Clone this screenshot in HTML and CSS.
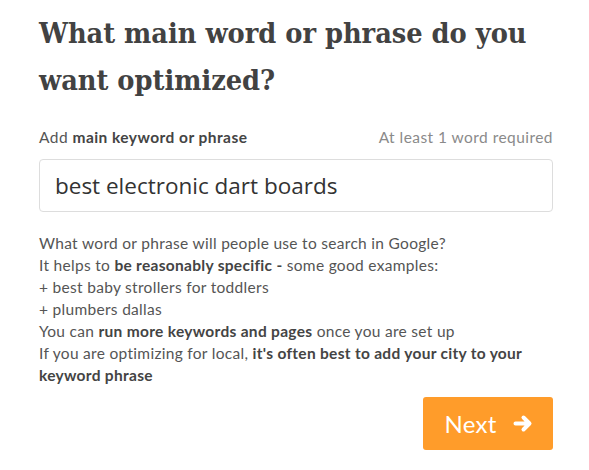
FILE: index.html
```html
<!DOCTYPE html>
<html>
<head>
<meta charset="utf-8">
<link rel="stylesheet" href="styles.css">
</head>
<body>
<div class="page">
  <h1 class="title">What main word or phrase do you want optimized?</h1>
  <div class="label-row">
    <span class="label">Add <b>main keyword or phrase</b></span>
    <span class="hint">At least 1 word required</span>
  </div>
  <div class="input">best electronic dart boards</div>
  <div class="help">
    <p>What word or phrase will people use to search in Google?</p>
    <p>It helps to <b>be reasonably specific -</b> some good examples:</p>
    <p>+ best baby strollers for toddlers</p>
    <p>+ plumbers dallas</p>
    <p>You can <b>run more keywords and pages</b> once you are set up</p>
    <p>If you are optimizing for local, <b>it's often best to add your city to your keyword phrase</b></p>
  </div>
  <div class="actions">
    <button class="next">Next
      <svg class="arrow" width="21" height="19" viewBox="0 0 21 19"><path d="M2.5 9.5 H16 M10.5 3.5 L16.5 9.5 L10.5 15.5" fill="none" stroke="#fff" stroke-width="4" stroke-linecap="round" stroke-linejoin="round"/></svg>
    </button>
  </div>
</div>
</body>
</html>
```
FILE: styles.css
```css
html, body { margin: 0; padding: 0; background: #fff; }
.page {
  padding: 0 36px 0 39px;
  width: 514px;
  font-family: Lato, "Noto Sans", sans-serif;
  color: #555;
}
.title {
  margin: 0;
  padding-top: 10px;
  font-family: "DejaVu Serif Condensed", "DejaVu Serif", serif;
  font-stretch: condensed;
  font-weight: bold;
  font-size: 28.6px;
  line-height: 47px;
  color: #424242;
}
.label-row {
  margin-top: 23px;
  display: flex;
  justify-content: space-between;
  font-size: 15.5px;
  letter-spacing: 0.45px;
  line-height: 20px;
}
.label { color: #555; }
.label b { color: #444; font-weight: bold; }
.hint { color: #8a8a8a; }
.input {
  margin-top: 12px;
  border: 1px solid #ddd;
  border-radius: 4px;
  box-sizing: border-box;
  height: 53px;
  padding-left: 15px;
  display: flex;
  align-items: center;
  font-family: "Open Sans", sans-serif;
  font-size: 22.5px;
  color: #333;
}
.help {
  margin-top: 20px;
  font-size: 15.5px;
  letter-spacing: 0.3px;
  line-height: 22px;
}
.help p { margin: 0; }
.help b { color: #444; }
.actions {
  margin-top: 11px;
  display: flex;
  justify-content: flex-end;
}
.next {
  width: 130px;
  height: 53px;
  border: none;
  border-radius: 3px;
  background: #ff9c2a;
  color: #fff;
  font-family: Lato, sans-serif;
  font-size: 24px;
  letter-spacing: 0.3px;
  display: flex;
  align-items: center;
  justify-content: center;
  gap: 16px;
  padding: 0 0 0 2px;
}
.arrow { display: block; }
```
